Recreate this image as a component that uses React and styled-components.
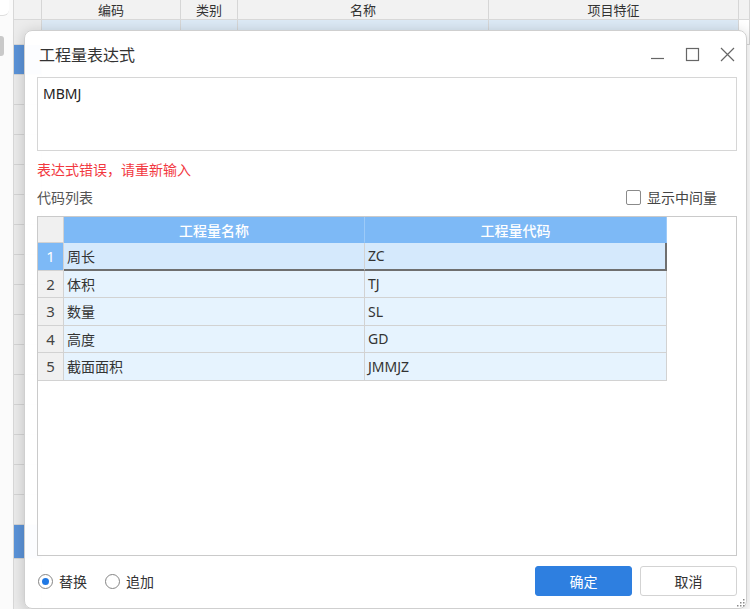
import React from "react";
import styled, { createGlobalStyle } from "styled-components";

const GlobalStyle = createGlobalStyle`
  html, body {
    margin: 0;
    padding: 0;
    width: 750px;
    height: 609px;
    overflow: hidden;
    background: #f4f4f4;
    font-family: "Noto Sans", "Noto Sans CJK SC", sans-serif;
    font-size: 14px;
    color: #333;
  }
  * { box-sizing: border-box; }
`;

const colors = {
  headBlue: "#7db9f6",
  rowBlue: "#e6f3fe",
  rowSelected: "#d5e9fc",
  gridLine: "#d2d2d2",
  gutter: "#f0f0f0",
  primary: "#2e7fe0",
  error: "#f2383f"
};

const Screen = styled.div`
  position: relative;
  width: 750px;
  height: 609px;
  overflow: hidden;
`;

/* ---------- the app behind the dialog ---------- */

const Backdrop = styled.div`
  display: flex;
  height: 100%;
`;

const SidePane = styled.div`
  width: 14px;
  flex-shrink: 0;
  display: flex;
  flex-direction: column;
  gap: 20px;
  background: #fbfbfb;
  border-right: 1px solid #d8d8d8;
`;

const SideCap = styled.div`
  height: 16px;
  margin-right: 4px;
  border-bottom: 1px solid #dedede;
  border-bottom-right-radius: 6px;
  background: #fff;
`;

const SideKnob = styled.div`
  width: 4px;
  height: 20px;
  border-radius: 0 3px 3px 0;
  background: #c9c9c9;
`;

const Sheet = styled.div`
  flex: 1;
  display: flex;
  flex-direction: column;
  background: #fff;
`;

const SheetRow = styled.div`
  display: grid;
  grid-template-columns: 28px 139px 57px 251px 250px 1fr;
  height: ${p => (p.$head ? 20 : 25)}px;
  background: ${p => (p.$head ? "#f2f2f2" : p.$active ? "#dce9f5" : "#fff")};
  border-bottom: 1px solid #d9d9d9;
`;

const SheetCell = styled.div`
  display: flex;
  align-items: center;
  justify-content: center;
  border-right: 1px solid #d6d6d6;
  font-family: "Noto Sans CJK SC", sans-serif;
  font-size: 13px;
  color: #333;
  background: ${p => p.$bg || "transparent"};
`;

const SheetFill = styled.div`
  flex: 1;
  display: grid;
  grid-template-columns: 28px 1fr;
`;

const GutterColumn = styled.div`
  display: flex;
  flex-direction: column;
  background: #ebebeb;
  border-right: 1px solid #d0d0d0;
`;

const GutterCell = styled.div`
  height: ${p => p.$h || 30}px;
  background: ${p => p.$bg || "transparent"};
  border-bottom: 1px solid #d4d4d4;
`;

/* ---------- dialog ---------- */

const Dialog = styled.div`
  position: absolute;
  left: 24px;
  top: 30px;
  width: 723px;
  height: 579px;
  display: flex;
  flex-direction: column;
  padding: 0 9px 0 12px;
  background: rgba(255, 255, 255, 0.98);
  border: 1px solid #cfcfcf;
  border-radius: 8px;
  box-shadow: 0 2px 14px rgba(0, 0, 0, 0.18);
`;

const TitleBar = styled.div`
  height: 46px;
  flex-shrink: 0;
  display: flex;
  align-items: center;
  justify-content: space-between;
  padding-left: 2px;
`;

const Title = styled.div`
  font-family: "Noto Sans CJK SC", sans-serif;
  font-size: 16px;
  color: #333;
`;

const WinControls = styled.div`
  display: flex;
  align-items: center;
  gap: 20px;
  margin-right: 2px;
  color: #666;
`;

const WinButton = styled.div`
  width: 15px;
  height: 15px;
  display: flex;
  align-items: center;
  justify-content: center;
`;

const ExprBox = styled.div`
  height: 74px;
  flex-shrink: 0;
  padding: 5px 5px;
  border: 1px solid #d6d6d6;
  background: #fff;
  font-size: 14px;
  line-height: 22px;
  color: #222;
`;

const ErrorText = styled.div`
  margin-top: 8px;
  line-height: 20px;
  font-family: "Noto Sans CJK SC", sans-serif;
  font-size: 14px;
  color: ${colors.error};
`;

const ListHeader = styled.div`
  margin-top: 8px;
  height: 20px;
  display: flex;
  align-items: center;
  justify-content: space-between;
  padding-right: 20px;
  font-family: "Noto Sans CJK SC", sans-serif;
  color: #555;
`;

const CheckLabel = styled.label`
  display: flex;
  align-items: center;
  gap: 6px;
  color: #444;
`;

const CheckBox = styled.span`
  width: 15px;
  height: 15px;
  border: 1px solid #8a8a8a;
  border-radius: 2px;
  background: #fff;
`;

const GridBox = styled.div`
  margin-top: 9px;
  height: 340px;
  flex-shrink: 0;
  border: 1px solid #cacaca;
  background: #fff;
`;

const Grid = styled.div`
  display: grid;
  grid-template-columns: 26px 301px 302px;
  grid-template-rows: 26px;
  grid-auto-rows: 27.5px;
  width: 629px;
`;

const HeadCell = styled.div`
  display: flex;
  align-items: center;
  justify-content: center;
  background: ${p => (p.$corner ? colors.gutter : colors.headBlue)};
  border-right: 1px solid ${p => (p.$corner ? colors.gridLine : "#9ccaf8")};
  border-bottom: 1px solid ${p => (p.$corner ? colors.gridLine : colors.headBlue)};
  font-family: "Noto Sans CJK SC", sans-serif;
  font-size: 14px;
  font-weight: 500;
  color: #fff;
`;

const NumCell = styled.div`
  display: flex;
  align-items: center;
  justify-content: center;
  background: ${p => (p.$selected ? colors.headBlue : colors.gutter)};
  border-right: 1px solid ${colors.gridLine};
  border-bottom: 1px solid ${colors.gridLine};
  font-size: 15px;
  color: ${p => (p.$selected ? "#fff" : "#444")};
`;

const DataCell = styled.div`
  display: flex;
  align-items: center;
  padding-left: 3px;
  background: ${p => (p.$selected ? colors.rowSelected : colors.rowBlue)};
  border-right: ${p => (p.$selected && p.$last ? "2px solid #6f6f6f" : `1px solid ${colors.gridLine}`)};
  border-bottom: ${p => (p.$selected ? "2px solid #6f6f6f" : `1px solid ${colors.gridLine}`)};
  font-size: 14px;
  color: #333;
`;

const Footer = styled.div`
  flex: 1;
  display: flex;
  align-items: center;
  justify-content: space-between;
  padding: 0 0 2px 1px;
`;

const RadioGroup = styled.div`
  display: flex;
  align-items: center;
  gap: 18px;
  font-family: "Noto Sans CJK SC", sans-serif;
`;

const RadioLabel = styled.label`
  display: flex;
  align-items: center;
  gap: 6px;
  color: #333;
`;

const RadioDot = styled.span`
  width: 15px;
  height: 15px;
  border-radius: 50%;
  border: 1px solid #858585;
  background: #fff;
  display: flex;
  align-items: center;
  justify-content: center;

  &::after {
    content: "";
    width: 7px;
    height: 7px;
    border-radius: 50%;
    background: ${p => (p.$checked ? "#1f78e4" : "transparent")};
  }
`;

const Buttons = styled.div`
  display: flex;
  gap: 8px;
`;

const Button = styled.button`
  width: 97px;
  height: 30px;
  border-radius: 3px;
  border: 1px solid ${p => (p.$primary ? colors.primary : "#d3d3d3")};
  background: ${p => (p.$primary ? colors.primary : "#fff")};
  color: ${p => (p.$primary ? "#fff" : "#333")};
  font-family: "Noto Sans CJK SC", sans-serif;
  font-size: 14px;
  padding: 0;
`;

const Grip = styled.svg`
  position: absolute;
  right: 1px;
  bottom: 1px;
`;

const rows = [
  ["周长", "ZC"],
  ["体积", "TJ"],
  ["数量", "SL"],
  ["高度", "GD"],
  ["截面面积", "JMMJZ"]
];

const MinIcon = () => (
  <svg width="15" height="15" viewBox="0 0 15 15">
    <path d="M1 11.5h13" stroke="currentColor" strokeWidth="1.2" />
  </svg>
);

const MaxIcon = () => (
  <svg width="15" height="15" viewBox="0 0 15 15">
    <rect x="1.5" y="1.5" width="12" height="12" fill="none" stroke="currentColor" strokeWidth="1.2" />
  </svg>
);

const CloseIcon = () => (
  <svg width="15" height="15" viewBox="0 0 15 15">
    <path d="M1 1l13 13M14 1L1 14" stroke="currentColor" strokeWidth="1.2" />
  </svg>
);

const gutterCells = [30, 30, 30, 30, 30, 30, 30, 30, 30, 30, 30, 30, 30, 30, 30, 30];

export default function App() {
  return (
    <Screen>
      <GlobalStyle />
      <Backdrop>
        <SidePane>
          <SideCap />
          <SideKnob />
        </SidePane>
        <Sheet>
          <SheetRow $head>
            <SheetCell />
            <SheetCell>编码</SheetCell>
            <SheetCell>类别</SheetCell>
            <SheetCell>名称</SheetCell>
            <SheetCell>项目特征</SheetCell>
            <SheetCell />
          </SheetRow>
          <SheetRow $active>
            <SheetCell $bg="#ececec" />
            <SheetCell />
            <SheetCell />
            <SheetCell />
            <SheetCell />
            <SheetCell $bg="#fff" />
          </SheetRow>
          <SheetFill>
            <GutterColumn>
              {gutterCells.map((h, i) => (
                <GutterCell key={i} $h={h} $bg={i === 0 ? "#5b93d8" : undefined} />
              ))}
              <GutterCell $h={34} $bg="#5b93d8" />
            </GutterColumn>
            <div />
          </SheetFill>
        </Sheet>
      </Backdrop>

      <Dialog>
        <TitleBar>
          <Title>工程量表达式</Title>
          <WinControls>
            <WinButton><MinIcon /></WinButton>
            <WinButton><MaxIcon /></WinButton>
            <WinButton><CloseIcon /></WinButton>
          </WinControls>
        </TitleBar>

        <ExprBox>MBMJ</ExprBox>
        <ErrorText>表达式错误，请重新输入</ErrorText>

        <ListHeader>
          <span>代码列表</span>
          <CheckLabel>
            <CheckBox />
            显示中间量
          </CheckLabel>
        </ListHeader>

        <GridBox>
          <Grid>
            <HeadCell $corner />
            <HeadCell>工程量名称</HeadCell>
            <HeadCell>工程量代码</HeadCell>
            {rows.map(([name, code], i) => (
              <React.Fragment key={code}>
                <NumCell $selected={i === 0}>{i + 1}</NumCell>
                <DataCell $selected={i === 0}>{name}</DataCell>
                <DataCell $selected={i === 0} $last>{code}</DataCell>
              </React.Fragment>
            ))}
          </Grid>
        </GridBox>

        <Footer>
          <RadioGroup>
            <RadioLabel>
              <RadioDot $checked />
              替换
            </RadioLabel>
            <RadioLabel>
              <RadioDot />
              追加
            </RadioLabel>
          </RadioGroup>
          <Buttons>
            <Button $primary>确定</Button>
            <Button>取消</Button>
          </Buttons>
        </Footer>

        <Grip width="9" height="9" viewBox="0 0 9 9">
          <g fill="#8a8a8a">
            <rect x="7" y="1" width="1.5" height="1.5" />
            <rect x="4" y="4" width="1.5" height="1.5" />
            <rect x="7" y="4" width="1.5" height="1.5" />
            <rect x="1" y="7" width="1.5" height="1.5" />
            <rect x="4" y="7" width="1.5" height="1.5" />
            <rect x="7" y="7" width="1.5" height="1.5" />
          </g>
        </Grip>
      </Dialog>
    </Screen>
  );
}
